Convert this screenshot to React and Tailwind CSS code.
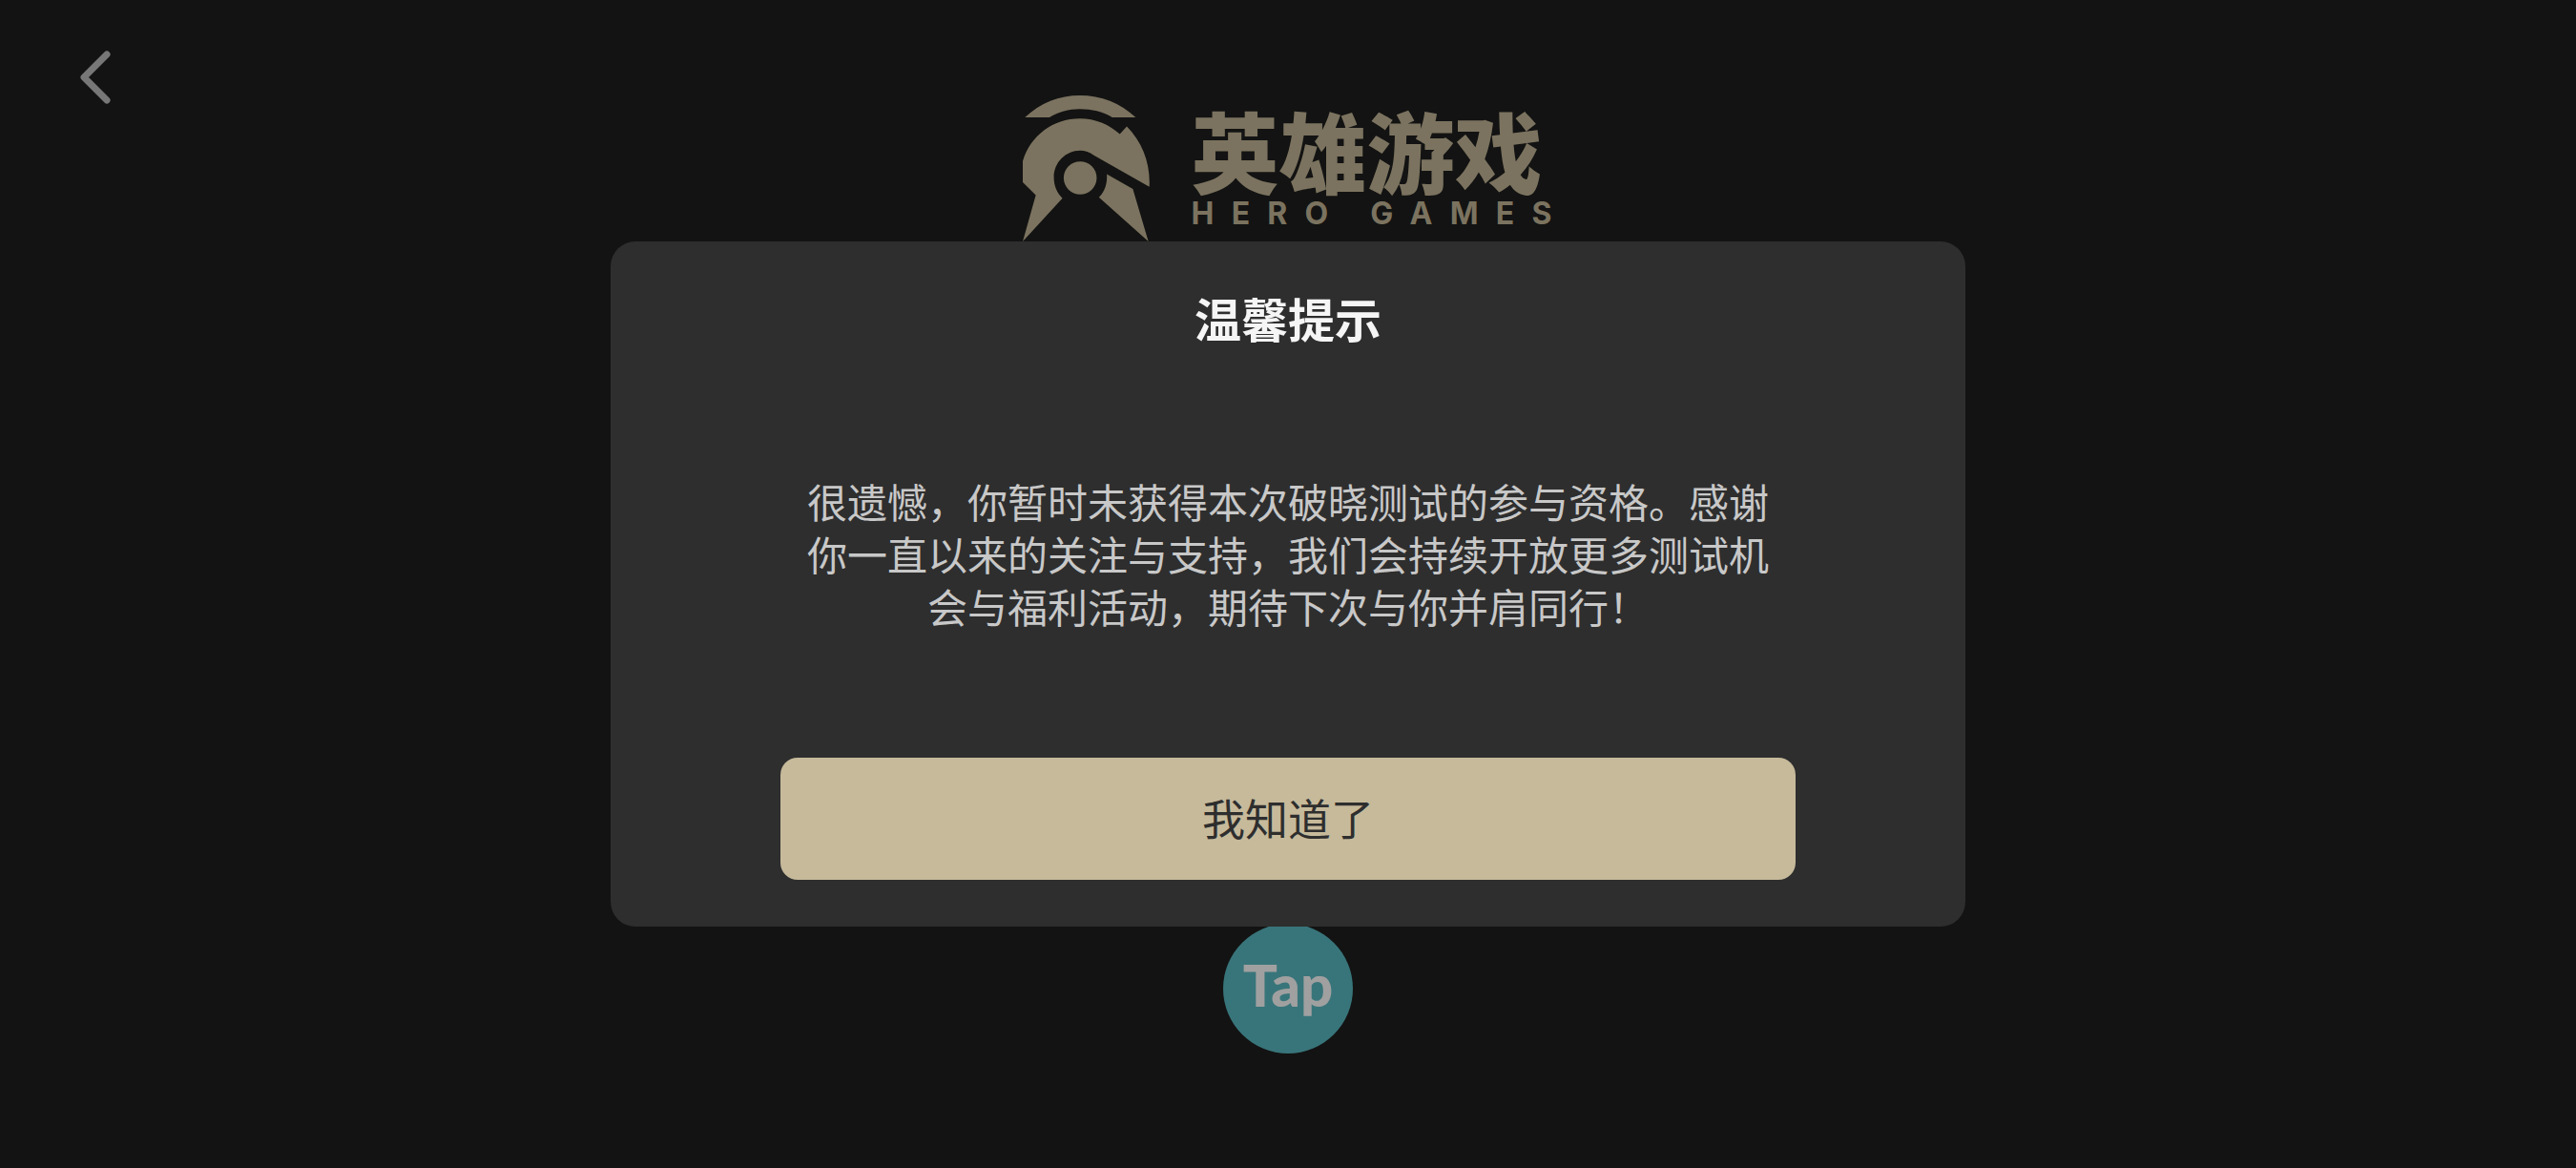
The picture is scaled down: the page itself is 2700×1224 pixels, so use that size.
import React, { useState } from 'react';

const HelmetMark = () => (
  <svg viewBox="63 59 400 460" className="w-[133px] shrink-0" fill="currentColor" aria-hidden="true">
    <path d="M70 128C118 83 178 59 243 59C310 59 370 83 419 128H345C315 110 280 102 243 102C208 102 175 111 147 128Z" />
    <path d="M63 266C87 186 158 132 243 132C291 132 335 150 369 181L391 157C440 207 466 274 462 347L287 248C274 238 259 233 244 233C198 233 161 271 161 317C161 344 171 367 188 383L63 519L104 373L63 333Z" />
    <path d="M328 307L410 354L459 519L303 380C322 362 330 335 328 307Z" />
    <circle cx="244" cy="319" r="52" />
  </svg>
);

const BrandLogo = () => (
  <div className="mt-13 flex items-start gap-11 text-[#7b735f]">
    <HelmetMark />
    <div className="mt-2 flex w-[380px] flex-col gap-2 font-black whitespace-nowrap">
      <span className="text-[92px] leading-24">英雄游戏</span>
      <span className="font-['Inter',sans-serif] text-[32px] leading-6 font-bold tracking-[0.57em]">
        HERO GAMES
      </span>
    </div>
  </div>
);

const NoticeDialog = ({ onClose }) => (
  <div className="fixed inset-0 flex items-center justify-center">
    <div
      role="dialog"
      aria-modal="true"
      aria-labelledby="notice-title"
      className="flex w-full max-w-[1420px] flex-col items-center rounded-[26px] bg-[#2e2e2e] px-[178px] pt-[46px] pb-[49px]"
    >
      <h2 id="notice-title" className="text-[49px] leading-[68px] font-bold text-[#f5f5f5]">
        温馨提示
      </h2>
      <p className="mt-[130px] px-6 text-center text-[42px] leading-[55px] text-[#c8c8c8]">
        很遗憾，你暂时未获得本次破晓测试的参与资格。感谢你一直以来的关注与支持，我们会持续开放更多测试机会与福利活动，期待下次与你并肩同行！
      </p>
      <button
        type="button"
        onClick={onClose}
        className="mt-[132px] h-32 w-full rounded-[18px] bg-[#c6ba9b] pb-0.5 text-[45px] text-[#2e2e2e]"
      >
        我知道了
      </button>
    </div>
  </div>
);

const App = () => {
  const [open, setOpen] = useState(true);

  return (
    <div
      lang="zh-CN"
      className="flex min-h-screen flex-col justify-between bg-[#131313] font-['Noto_Sans_CJK_SC',sans-serif]"
    >
      <header className="grid grid-cols-[1fr_auto_1fr] items-start px-20 pt-12">
        <button type="button" aria-label="返回" className="justify-self-start text-[#777777]">
          <svg
            viewBox="0 0 40 66"
            className="w-10"
            fill="none"
            stroke="currentColor"
            strokeWidth="7"
            strokeLinecap="round"
            strokeLinejoin="round"
          >
            <path d="M32 9L8 33L32 57" />
          </svg>
        </button>
        <BrandLogo />
      </header>

      <footer className="flex justify-center pb-30">
        <button
          type="button"
          className="flex size-[136px] items-center justify-center rounded-full bg-[#38757a] pb-2 font-['Lato',sans-serif] text-[60px] leading-none font-black text-[#a0a0a0]"
        >
          Tap
        </button>
      </footer>

      {open && <NoticeDialog onClose={() => setOpen(false)} />}
    </div>
  );
};

export default App;
